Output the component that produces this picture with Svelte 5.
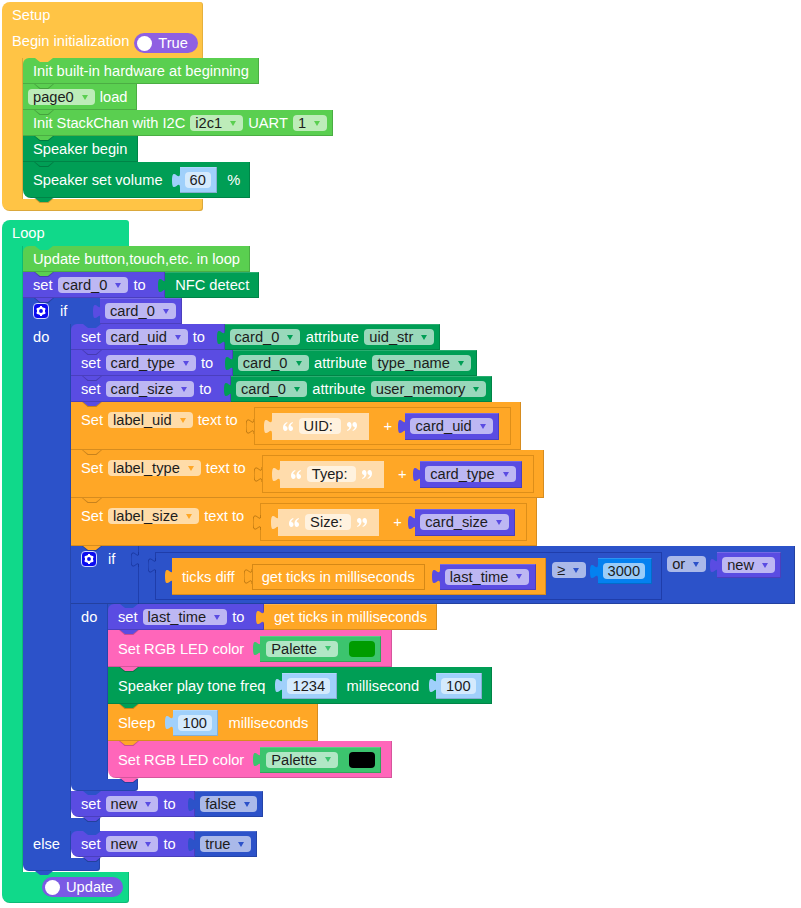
<script lang="ts">
  // Block workspace: a setup hat and a loop hat, built from nested flex stacks.
</script>

{#snippet tab(hollow = false)}
  <svg class="tab" class:hollow viewBox="0 0 8 15" aria-hidden="true">
    <path d="M8 15c0-10-8 8-8-7.500s8 2.500 8-7.500" />
  </svg>
{/snippet}

{#snippet dd(label: string)}
  <span class="dd">{label}<i class="caret"></i></span>
{/snippet}

{#snippet num(value: string, cls = 'c-num')}
  <span class="val num {cls}">
    {@render tab()}
    <span class="numfield">{value}</span>
  </span>
{/snippet}

{#snippet varblock(name: string, cls = 'val')}
  <span class="{cls} c-var">
    {@render tab()}
    {@render dd(name)}
  </span>
{/snippet}

{#snippet gear()}
  <svg class="gear" viewBox="0 0 16 16" aria-hidden="true">
    <rect x="0.500" y="0.500" width="15" height="15" rx="3.500" fill="#0a0af0" stroke="#cfd8ff" />
    <circle cx="8" cy="8" r="3" fill="none" stroke="#fff" stroke-width="2.200" />
    <path d="M8 3v2M8 11v2M3.700 5.500l1.700 1M10.600 9.500l1.700 1M3.700 10.500l1.700-1M10.600 6.500l1.700-1" stroke="#fff" stroke-width="2" />
  </svg>
{/snippet}

{#snippet quote(close = false)}
  <svg class="quote" class:close viewBox="0 0 11 9" preserveAspectRatio="none" aria-hidden="true">
    <path d="M4.500 0C1.500 1 0 3 0 5.500 0 7.500 1 9 2.500 9S5 8 5 6.500 4 4 2.500 4C2.500 2.500 3.500 1.500 5 1zM10.500 0C7.500 1 6 3 6 5.500 6 7.500 7 9 8.500 9S11 8 11 6.500 10 4 8.500 4C8.500 2.500 9.500 1.500 11 1z" />
  </svg>
{/snippet}

{#snippet labelRow(field: string, text: string, variable: string)}
  <div class="blk tall c-orange notch">
    <span class="line">Set</span>
    {@render dd(field)}
    <span class="line">text to</span>
    <span class="join c-orange">
      {@render tab(true)}
      <span class="txt c-text">
        {@render tab()}
        {@render quote()}
        <span class="txtfield">{text}</span>
        {@render quote(true)}
      </span>
      <span class="plus">+</span>
      {@render varblock(variable, 'val big')}
    </span>
  </div>
{/snippet}

{#snippet setAttr(name: string, attr: string)}
  <div class="row">
    <div class="blk c-var notch">set {@render dd(name)} to</div>
    <div class="val tall26 attr c-dgreen">
      {@render tab()}
      {@render dd('card_0')}
      <span>attribute</span>
      {@render dd(attr)}
    </div>
  </div>
{/snippet}

{#snippet setBool(value: string)}
  <div class="row">
    <div class="blk c-var notch last">set {@render dd('new')} to</div>
    <div class="val tall26 c-blue">
      {@render tab()}
      {@render dd(value)}
    </div>
  </div>
{/snippet}

{#snippet led(swatch: string, cls: string)}
  <div class="blk led c-pink notch {cls}">
    <span class="line">Set RGB LED color</span>
    <span class="val palette c-palette">
      {@render tab()}
      {@render dd('Palette')}
      <i class="swatch" style="background:{swatch}"></i>
    </span>
  </div>
{/snippet}

<main class="workspace">
  <section class="cblock setup c-gold">
    <div class="head notch-host">
      <div class="title">Setup</div>
      <div class="begin">
        <span>Begin initialization</span>
        <span class="switch"><i></i>True</span>
      </div>
    </div>
    <div class="body">
      <div class="spine"></div>
      <div class="stack">
        <div class="blk c-lime notch">Init built-in hardware at beginning</div>
        <div class="blk fieldfirst c-lime notch">{@render dd('page0')} load</div>
        <div class="blk fieldlast c-lime notch">Init StackChan with I2C {@render dd('i2c1')} UART {@render dd('1')}</div>
        <div class="blk c-dgreen notch">Speaker begin</div>
        <div class="blk mid short c-dgreen notch last">
          <span>Speaker set volume</span>
          {@render num('60')}
          <span class="pct">%</span>
        </div>
      </div>
    </div>
    <div class="foot"></div>
  </section>

  <section class="cblock loop c-mint">
    <div class="head notch-host"><div class="title">Loop</div></div>
    <div class="body">
      <div class="spine"></div>
      <div class="stack">
        <div class="blk c-lime notch">Update button,touch,etc. in loop</div>
        <div class="row">
          <div class="blk c-var notch">set {@render dd('card_0')} to</div>
          <div class="val tall26 nfc c-dgreen">
            {@render tab()}
            NFC detect
          </div>
        </div>

        <div class="cblock ifblock c-blue">
          <div class="ifhead">
            <div class="head notch-host">{@render gear()}<span class="kw">if</span></div>
            {@render varblock('card_0', 'val tall26')}
          </div>
          <div class="body">
            <div class="spine"><span class="kw">do</span></div>
            <div class="stack">
              {@render setAttr('card_uid', 'uid_str')}
              {@render setAttr('card_type', 'type_name')}
              {@render setAttr('card_size', 'user_memory')}
              {@render labelRow('label_uid', 'UID:', 'card_uid')}
              {@render labelRow('label_type', 'Tyep:', 'card_type')}
              {@render labelRow('label_size', 'Size:', 'card_size')}

              <div class="cblock innerif c-blue">
                <div class="inhead notch-host">
                  <div class="ifcol">{@render gear()}<span class="kw">if</span></div>
                  <div class="orblock">
                    {@render tab(true)}
                    <div class="cmp">
                      {@render tab(true)}
                      <div class="ticks c-orange">
                        {@render tab()}
                        <span class="line">ticks diff</span>
                        <span class="gettick">
                          {@render tab(true)}
                          get ticks in milliseconds
                        </span>
                        {@render varblock('last_time', 'val big26')}
                      </div>
                      <span class="ddwrap ge">{@render dd('≥')}</span>
                      {@render num('3000', 'c-bright')}
                    </div>
                    <span class="ddwrap or">{@render dd('or')}</span>
                    {@render varblock('new', 'val newvar')}
                  </div>
                </div>
                <div class="body">
                  <div class="spine"><span class="kw">do</span></div>
                  <div class="stack">
                    <div class="row">
                      <div class="blk c-var notch">set {@render dd('last_time')} to</div>
                      <div class="val tall26 nfc c-orange">
                        {@render tab()}
                        get ticks in milliseconds
                      </div>
                    </div>
                    {@render led('#009c00', '')}
                    <div class="blk mid c-dgreen notch">
                      <span>Speaker play tone freq</span>
                      {@render num('1234')}
                      <span class="gapped">millisecond</span>
                      {@render num('100')}
                    </div>
                    <div class="blk mid c-orange notch">
                      <span>Sleep</span>
                      {@render num('100')}
                      <span class="gapped">milliseconds</span>
                    </div>
                    {@render led('#000', 'last')}
                  </div>
                </div>
                <div class="foot notch-host"></div>
              </div>

              {@render setBool('false')}
            </div>
          </div>
          <div class="gap notch-host"></div>
          <div class="body">
            <div class="spine"><span class="kw">else</span></div>
            <div class="stack">{@render setBool('true')}</div>
          </div>
          <div class="foot notch-host"></div>
        </div>
      </div>
    </div>
    <div class="foot">
      <span class="switch update"><i></i>Update</span>
    </div>
  </section>
</main>

<style>
  :global(body) {
    margin: 0;
    background: #fff;
  }

  .workspace {
    padding: 2px 0 0 2px;
    display: flex;
    flex-direction: column;
    gap: 9px;
    width: 799px;
    height: 906px;
    overflow: hidden;
    font: 14.67px/16px 'Liberation Sans', Arial, sans-serif;
    color: #fff;
  }

  /* palette */
  .c-gold { --c: #ffc445; }
  .c-mint { --c: #10d98a; }
  .c-lime { --c: #5acf50; }
  .c-dgreen { --c: #009e55; }
  .c-var { --c: #5a4ce2; }
  .c-blue { --c: #2c52c9; }
  .c-orange { --c: #ffa726; }
  .c-pink { --c: #ff66ba; }
  .c-palette { --c: #3cc46e; }
  .c-num { --c: #a0d0fb; }
  .c-bright { --c: #0481f0; }
  .c-text { --c: #ffdcac; }

  /* statement block */
  .blk {
    position: relative;
    display: flex;
    align-items: center;
    gap: 5px;
    box-sizing: border-box;
    width: fit-content;
    height: 26px;
    padding: 0 10px;
    background: var(--c);
    box-shadow: inset -1px -1px 0 rgba(0, 0, 0, 0.16);
    white-space: nowrap;
  }
  .fieldfirst { padding-left: 5px; }
  .fieldlast { padding-right: 6px; }
  .row > .blk { padding-right: 19.500px; }
  .row { display: flex; }
  .mid { height: 37px; }
  .short { height: 36px; }
  .led { height: 37px; padding-right: 11px; }
  .blk.last { border-bottom-left-radius: 8px; }

  .notch::after,
  .notch-host::after,
  .notch::before,
  .notch-host::before {
    content: '';
    position: absolute;
    z-index: 3;
    left: 12px;
    top: 100%;
    width: 18px;
    height: 4px;
    background: var(--c);
    clip-path: polygon(0 0, 100% 0, 72% 100%, 28% 100%);
  }
  /* faint edge under each notch */
  .notch::before,
  .notch-host::before {
    margin: 0 0 0 -1px;
    width: 20px;
    height: 5px;
    background: rgba(0, 0, 0, 0.22);
  }

  /* value blocks */
  .val {
    position: relative;
    display: inline-flex;
    align-items: center;
    gap: 5px;
    box-sizing: border-box;
    background: var(--c);
    padding: 0 6px 0 5px;
    box-shadow: inset -1px -1px 0 rgba(0, 0, 0, 0.16), inset 0 1px 0 rgba(255, 255, 255, 0.16);
    white-space: nowrap;
  }
  .attr { gap: 5.500px; }
  .tall26 { height: 26px; }
  .nfc { padding: 0 10px; }

  .tab {
    position: absolute;
    z-index: 2;
    left: -7.500px;
    top: 50%;
    width: 8px;
    height: 15px;
    margin-top: -7.500px;
    fill: var(--c);
    stroke: none;
  }
  .tab.hollow {
    stroke: rgba(130, 80, 0, 0.5);
    stroke-width: 1;
  }
  .orblock > .tab.hollow,
  .cmp > .tab.hollow { stroke: rgba(10, 30, 120, 0.45); }

  /* dropdown field */
  .dd {
    display: inline-flex;
    align-items: center;
    box-sizing: border-box;
    height: 16px;
    padding: 0 7px 0 5px;
    border-radius: 4px;
    background: rgba(255, 255, 255, 0.6);
    color: #1c1c1c;
    white-space: pre;
  }
  .caret {
    width: 0;
    height: 0;
    margin-left: 8px;
    border: 3px solid transparent;
    border-top: 5px solid var(--c);
    border-bottom: 0;
  }

  /* number */
  .num {
    height: 26px;
    padding: 0 6.500px 0 5px;
    margin-left: 12px;
  }
  .numfield {
    padding: 0 5px;
    height: 16px;
    border-radius: 4px;
    background: rgba(255, 255, 255, 0.55);
    color: #1c1c1c;
  }
  .c-bright { padding-right: 7px; }
  .c-bright .numfield { background: rgba(255, 255, 255, 0.6); }
  .pct { margin-left: 5px; }
  .gapped { margin-left: 5px; }

  /* color block */
  .palette {
    height: 26px;
    margin-left: 11px;
    padding: 0 6px;
    gap: 11px;
  }
  .swatch {
    width: 26px;
    height: 16px;
    border-radius: 4px;
  }

  /* hat / c-shaped blocks */
  .cblock { position: relative; width: fit-content; }
  .body { display: flex; }
  .spine {
    flex: none;
    background: var(--c);
    width: 21px;
    box-shadow: inset -1px 0 0 rgba(0, 0, 0, 0.14);
  }
  .stack {
    background: linear-gradient(var(--c), var(--c)) no-repeat 0 0 / 8px 8px;
    padding-bottom: 1px;
  }
  .stack > :first-child,
  .stack > .row:first-child > .blk { border-top-left-radius: 6px; }
  .head, .foot { background: var(--c); position: relative; }
  .foot {
    box-shadow: inset -1px -1px 0 rgba(0, 0, 0, 0.14);
  }

  .setup .head {
    width: 201px;
    height: 56px;
    box-sizing: border-box;
    padding: 5px 0 0 10px;
    border-radius: 8px 3px 0 0;
    box-shadow: inset -1px 0 0 rgba(0, 0, 0, 0.1);
  }
  .setup .foot {
    width: 201px;
    height: 12px;
    border-radius: 0 0 3px 8px;
  }
  .setup .head::after,
  .loop > .head::after { left: 33px; }
  .setup .head::before,
  .loop > .head::before { display: none; }
  .title { line-height: 16px; }
  .begin {
    display: flex;
    align-items: flex-start;
    gap: 5px;
    margin-top: 5px;
    line-height: 26px;
    height: 26px;
  }

  .switch {
    display: inline-flex;
    align-items: center;
    gap: 6px;
    height: 20px;
    margin-top: 5px;
    padding: 0 10px 0 3px;
    border-radius: 10px;
    background: #8f60e2;
    line-height: 20px;
  }
  .switch i {
    width: 15px;
    height: 15px;
    border-radius: 50%;
    background: #fff;
  }
  .update {
    position: absolute;
    left: 40px;
    top: 5px;
    margin: 0;
    background: #7b5ae4;
  }

  .loop > .head {
    width: 127px;
    height: 26px;
    box-sizing: border-box;
    padding: 5px 0 0 10px;
    border-radius: 8px 3px 0 0;
  }
  .loop > .foot {
    width: 127px;
    height: 31px;
    border-radius: 0 0 3px 8px;
  }

  /* if / else */
  .kw { display: inline-block; }
  .ifhead { display: flex; }
  .ifblock > .ifhead > .head {
    display: flex;
    align-items: center;
    gap: 11px;
    box-sizing: border-box;
    width: 77px;
    height: 26px;
    padding-left: 10px;
  }
  .ifblock > .ifhead > .head::after,
  .gap::after { left: 60px; }
  .ifblock > .ifhead > .head::before,
  .gap::before,
  .ifblock > .foot::before,
  .innerif > .foot::before,
  .inhead::before { display: none; }
  .ifblock > .body > .spine {
    width: 48px;
    padding: 5px 0 0 10px;
    box-sizing: border-box;
  }
  .ifblock > .body:last-of-type > .spine { display: flex; align-items: center; padding-top: 0; }
  .gap { width: 77px; height: 13px; background: var(--c); position: relative; }
  .ifblock > .foot {
    width: 77px;
    height: 13px;
    border-radius: 0 0 3px 6px;
  }
  .gear { width: 16px; height: 16px; flex: none; }

  /* text + variable join */
  .tall {
    height: 48px;
    align-items: flex-start;
    padding-top: 10px;
  }
  .line { line-height: 16px; }
  .tall .dd + .line { margin-right: 11px; }
  .join {
    position: relative;
    display: flex;
    align-items: center;
    box-sizing: border-box;
    height: 38px;
    margin-top: -5px;
    padding: 0 12px 0 18px;
    box-shadow: inset 0 0 0 1px rgba(150, 90, 0, 0.32);
  }
  .txt {
    position: relative;
    display: flex;
    align-items: center;
    height: 27px;
    padding: 0 12px 0 11px;
    background: var(--c);
  }
  .txtfield {
    height: 16px;
    margin: 0 6px;
    padding: 0 8px 0 5px;
    border-radius: 4px;
    background: #fff2df;
    color: #1c1c1c;
  }
  .quote { width: 10px; height: 9px; fill: #fff; flex: none; }
  .quote.close { transform: rotate(180deg); }
  .plus { margin: 0 13.500px 0 14.500px; }
  .big { height: 27px; }
  .big26 { height: 26px; margin-left: 14.500px; padding-right: 7px; }

  /* nested condition */
  .inhead {
    display: flex;
    background: var(--c);
    width: 724px;
    height: 58px;
    position: relative;
    box-shadow: inset -1px -1px 0 rgba(0, 0, 0, 0.2);
  }
  .inhead.notch-host::after { left: 49px; }
  .ifcol {
    display: flex;
    align-items: center;
    gap: 11px;
    width: 67px;
    height: 26px;
    flex: none;
    box-sizing: border-box;
    padding-left: 10px;
  }
  .orblock {
    position: relative;
    display: flex;
    align-items: flex-start;
    flex: 1;
    padding: 6px 0 0 17px;
    box-shadow: inset 1px 0 0 rgba(10, 30, 120, 0.35);
  }
  .orblock > .tab { top: 13px; }
  .cmp {
    position: relative;
    display: flex;
    align-items: flex-start;
    box-sizing: border-box;
    height: 48px;
    padding: 6px 10px 0 17px;
    box-shadow: inset 0 0 0 1px rgba(10, 30, 120, 0.38);
  }
  .cmp > .tab { top: 13px; }
  .ticks {
    position: relative;
    display: flex;
    align-items: center;
    box-sizing: border-box;
    height: 37px;
    padding: 0 10px;
    background: var(--c);
    box-shadow: inset -1px -1px 0 rgba(0, 0, 0, 0.16);
  }
  .ticks .line { margin-right: 17px; }
  .gettick {
    position: relative;
    height: 26px;
    padding: 0 10.500px 0 10px;
    line-height: 26px;
    white-space: nowrap;
    box-shadow: inset 0 0 0 1px rgba(150, 90, 0, 0.4);
  }
  .ddwrap { display: block; }
  .ge { margin: 4px 4px 0 5.500px; }
  .ge :global(.dd) { --c: #2c52c9; }
  .or { margin: 4px 4px 0 5px; }
  .newvar { height: 26px; margin-left: 7px; }
  .cmp .num { margin-left: 7.500px; }
  .innerif > .body > .spine {
    width: 37px;
    padding: 5px 0 0 10px;
    box-sizing: border-box;
  }
  .innerif > .foot {
    width: 67px;
    height: 12px;
    border-radius: 0 0 3px 6px;
  }
</style>
